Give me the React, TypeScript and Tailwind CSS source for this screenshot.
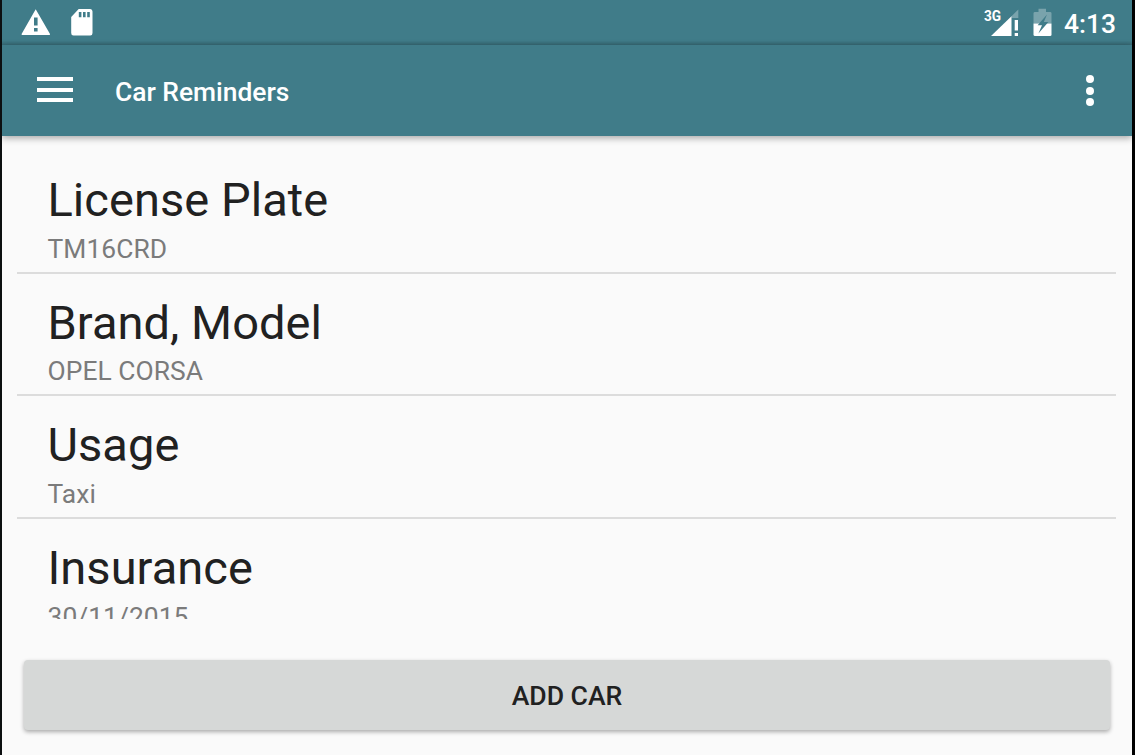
import React from 'react';

const reminders = [
  { title: 'License Plate', value: 'TM16CRD' },
  { title: 'Brand, Model', value: 'OPEL CORSA' },
  { title: 'Usage', value: 'Taxi' },
  { title: 'Insurance', value: '30/11/2015' },
];

function WarningIcon() {
  return (
    <svg width="30" height="28" viewBox="0 0 30 28" className="block">
      <path
        fillRule="evenodd"
        fill="#fff"
        d="M14.7 1.2 L29 26 Q29.2 27 28.4 27 H1.2 Q.4 27 .6 26 Z M13 9.5 V17.5 H16.6 V9.5 Z M13 20 V23.5 H16.6 V20 Z"
      />
    </svg>
  );
}

function SdCardIcon() {
  return (
    <svg width="22" height="28" viewBox="0 0 22 28" className="block">
      <path
        fillRule="evenodd"
        fill="#fff"
        d="M7.7 1 H19.3 Q21.5 1 21.5 3.5 V25 Q21.5 27.5 19.3 27.5 H2.5 Q.2 27.5 .2 25 V9 Z M7.8 4 V9.3 H10.4 V4 Z M12 4 V9.3 H14.6 V4 Z M16.2 4 V9.3 H18.8 V4 Z"
      />
    </svg>
  );
}

function SignalIcon() {
  return (
    <svg width="28" height="28" viewBox="0 0 28 28" className="block">
      <path fill="#fff" fillOpacity=".3" d="M27.3 1.5 V10 H20.5 V8.3 Z" />
      <path fill="#fff" d="M0 28 L20.5 8.3 V28 Z" />
      <path fill="#fff" d="M23.7 12 H27 V22.5 H23.7 Z M23.7 25 H27 V28 H23.7 Z" />
    </svg>
  );
}

function BatteryIcon() {
  return (
    <svg width="19" height="28" viewBox="0 0 19 28" className="block">
      <path
        fill="#fff"
        fillOpacity=".3"
        d="M5.5 .8 H13 V4 H17 Q18.5 4 18.5 5.3 V15.5 H.5 V5.3 Q.5 4 2 4 H5.5 Z"
      />
      <path fill="#fff" d="M.5 15.5 H18.5 V26.7 Q18.5 28 17 28 H2 Q.5 28 .5 26.7 Z" />
      <path fill="#407c89" d="M14 6.5 L4.6 17.3 L9 17.3 L5.4 25.5 L15.4 14 L10.8 14 Z" />
    </svg>
  );
}

function StatusBar() {
  return (
    <div className="flex h-[45px] shrink-0 items-start justify-between bg-linear-to-b from-[#407c89] from-90% to-[#376a75] pr-4 pl-[19px]">
      <div className="flex gap-[19.5px] pt-2">
        <WarningIcon />
        <SdCardIcon />
      </div>
      <div className="flex">
        <div className="relative mr-[14px] pt-2">
          <span className="absolute top-[9px] left-[-7px] origin-left scale-x-88 text-[15.5px] leading-[14px] font-bold">3G</span>
          <SignalIcon />
        </div>
        <div className="mr-[12px] pt-2">
          <BatteryIcon />
        </div>
        <span className="pt-[8px] text-[26.4px] leading-8 font-medium">4:13</span>
      </div>
    </div>
  );
}

function Toolbar() {
  return (
    <header className="z-10 flex h-[91px] shrink-0 items-center bg-[#407c89] pr-[38px] pl-[35px] shadow-[0_2px_7px_rgba(0,0,0,0.35)]">
      <button className="mb-[2px] flex flex-col gap-[6.5px]">
        <span className="h-[4px] w-9 bg-white" />
        <span className="h-[4px] w-9 bg-white" />
        <span className="h-[4px] w-9 bg-white" />
      </button>
      <h1 className="ml-[42px] pt-[3px] text-[26.4px] leading-8 font-medium">Car Reminders</h1>
      <button className="ml-auto flex flex-col gap-[3.3px]">
        <span className="size-2 rounded-full bg-white" />
        <span className="size-2 rounded-full bg-white" />
        <span className="size-2 rounded-full bg-white" />
      </button>
    </header>
  );
}

function App() {
  return (
    <div className="flex h-[755px] w-[1135px] flex-col overflow-hidden border-r-3 border-l-2 border-r-black border-l-[#0c0f10] bg-[#fafafa] font-[Roboto,sans-serif] text-white">
      <StatusBar />
      <Toolbar />

      <ul className="mr-4 ml-[15px] h-[483px] shrink-0 overflow-hidden pt-[15px]">
        {reminders.map((item) => (
          <li
            key={item.title}
            className="h-[122.67px] border-b-2 border-[#dcdcdc] pt-[22px] pl-[30.5px]"
          >
            <h2 className="text-[47px] leading-[54px] tracking-[0.05px] text-[#212121]">{item.title}</h2>
            <p className="mt-[5.8px] text-[26.4px] leading-8 tracking-[0.05px] text-[#7b7b7b]">{item.value}</p>
          </li>
        ))}
      </ul>

      <div className="mt-[41px] px-[22px]">
        <button className="h-[70px] w-full rounded-[4px] bg-[#d6d8d7] pt-px text-[26.6px] font-medium text-[#212121] shadow-[0_2px_4px_rgba(0,0,0,0.32)]">
          ADD CAR
        </button>
      </div>
    </div>
  );
}

export default App;
